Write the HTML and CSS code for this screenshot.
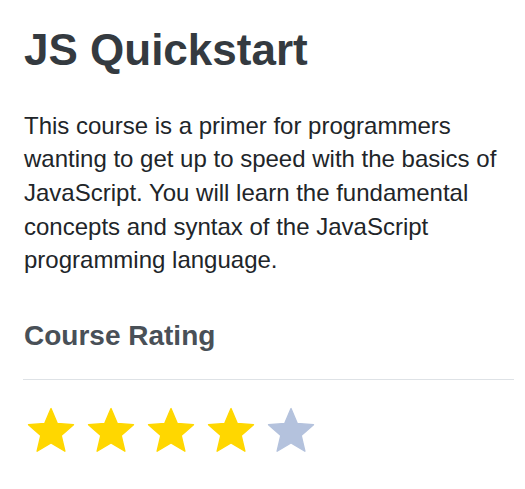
FILE: index.html
```html
<!DOCTYPE html>
<html>
<head>
<meta charset="utf-8">
<link rel="stylesheet" href="styles.css">
</head>
<body>
<main class="course">
  <h1 class="title">JS Quickstart</h1>
  <p class="desc">This course is a primer for programmers wanting to get up to speed with the basics of JavaScript. You will learn the fundamental concepts and syntax of the JavaScript programming language.</p>
  <h2 class="subtitle">Course Rating</h2>
  <hr class="divider">
  <div class="stars">
    <svg class="star on" viewBox="0 0 24 24"><path d="M12 17.27L18.18 21l-1.64-7.03L22 9.24l-7.19-.61L12 2 9.19 8.63 2 9.24l5.46 4.73L5.82 21z"/></svg>
    <svg class="star on" viewBox="0 0 24 24"><path d="M12 17.27L18.18 21l-1.64-7.03L22 9.24l-7.19-.61L12 2 9.19 8.63 2 9.24l5.46 4.73L5.82 21z"/></svg>
    <svg class="star on" viewBox="0 0 24 24"><path d="M12 17.27L18.18 21l-1.64-7.03L22 9.24l-7.19-.61L12 2 9.19 8.63 2 9.24l5.46 4.73L5.82 21z"/></svg>
    <svg class="star on" viewBox="0 0 24 24"><path d="M12 17.27L18.18 21l-1.64-7.03L22 9.24l-7.19-.61L12 2 9.19 8.63 2 9.24l5.46 4.73L5.82 21z"/></svg>
    <svg class="star off" viewBox="0 0 24 24"><path d="M12 17.27L18.18 21l-1.64-7.03L22 9.24l-7.19-.61L12 2 9.19 8.63 2 9.24l5.46 4.73L5.82 21z"/></svg>
  </div>
</main>
</body>
</html>
```

FILE: styles.css
```css
html, body {
  margin: 0;
  padding: 0;
  background: #ffffff;
}

body {
  font-family: "Liberation Sans", Arial, sans-serif;
  color: #212529;
}

.course {
  padding: 24px 11px 0 24px;
}

.title {
  margin: 0;
  font-size: 44px;
  line-height: 1.2;
  font-weight: 700;
  color: #343a40;
}

.desc {
  margin: 32px 0 0;
  font-size: 24px;
  line-height: 1.4;
  color: #212529;
}

.subtitle {
  margin: 42px 0 0;
  font-size: 28px;
  line-height: 1.2;
  font-weight: 700;
  color: #495057;
}

.divider {
  margin: 27px 0 0 -1px;
  border: 0;
  border-top: 1px solid #dee2e6;
  height: 0;
}

.stars {
  display: flex;
  gap: 6px;
  margin-top: 24px;
}

.star {
  width: 54px;
  height: 54px;
  display: block;
}

.star path {
  stroke-width: 0.6;
  stroke-linejoin: round;
}

.star.on path {
  fill: #ffd700;
  stroke: #ffd700;
}

.star.off path {
  fill: #b4c2dd;
  stroke: #b4c2dd;
}
```
